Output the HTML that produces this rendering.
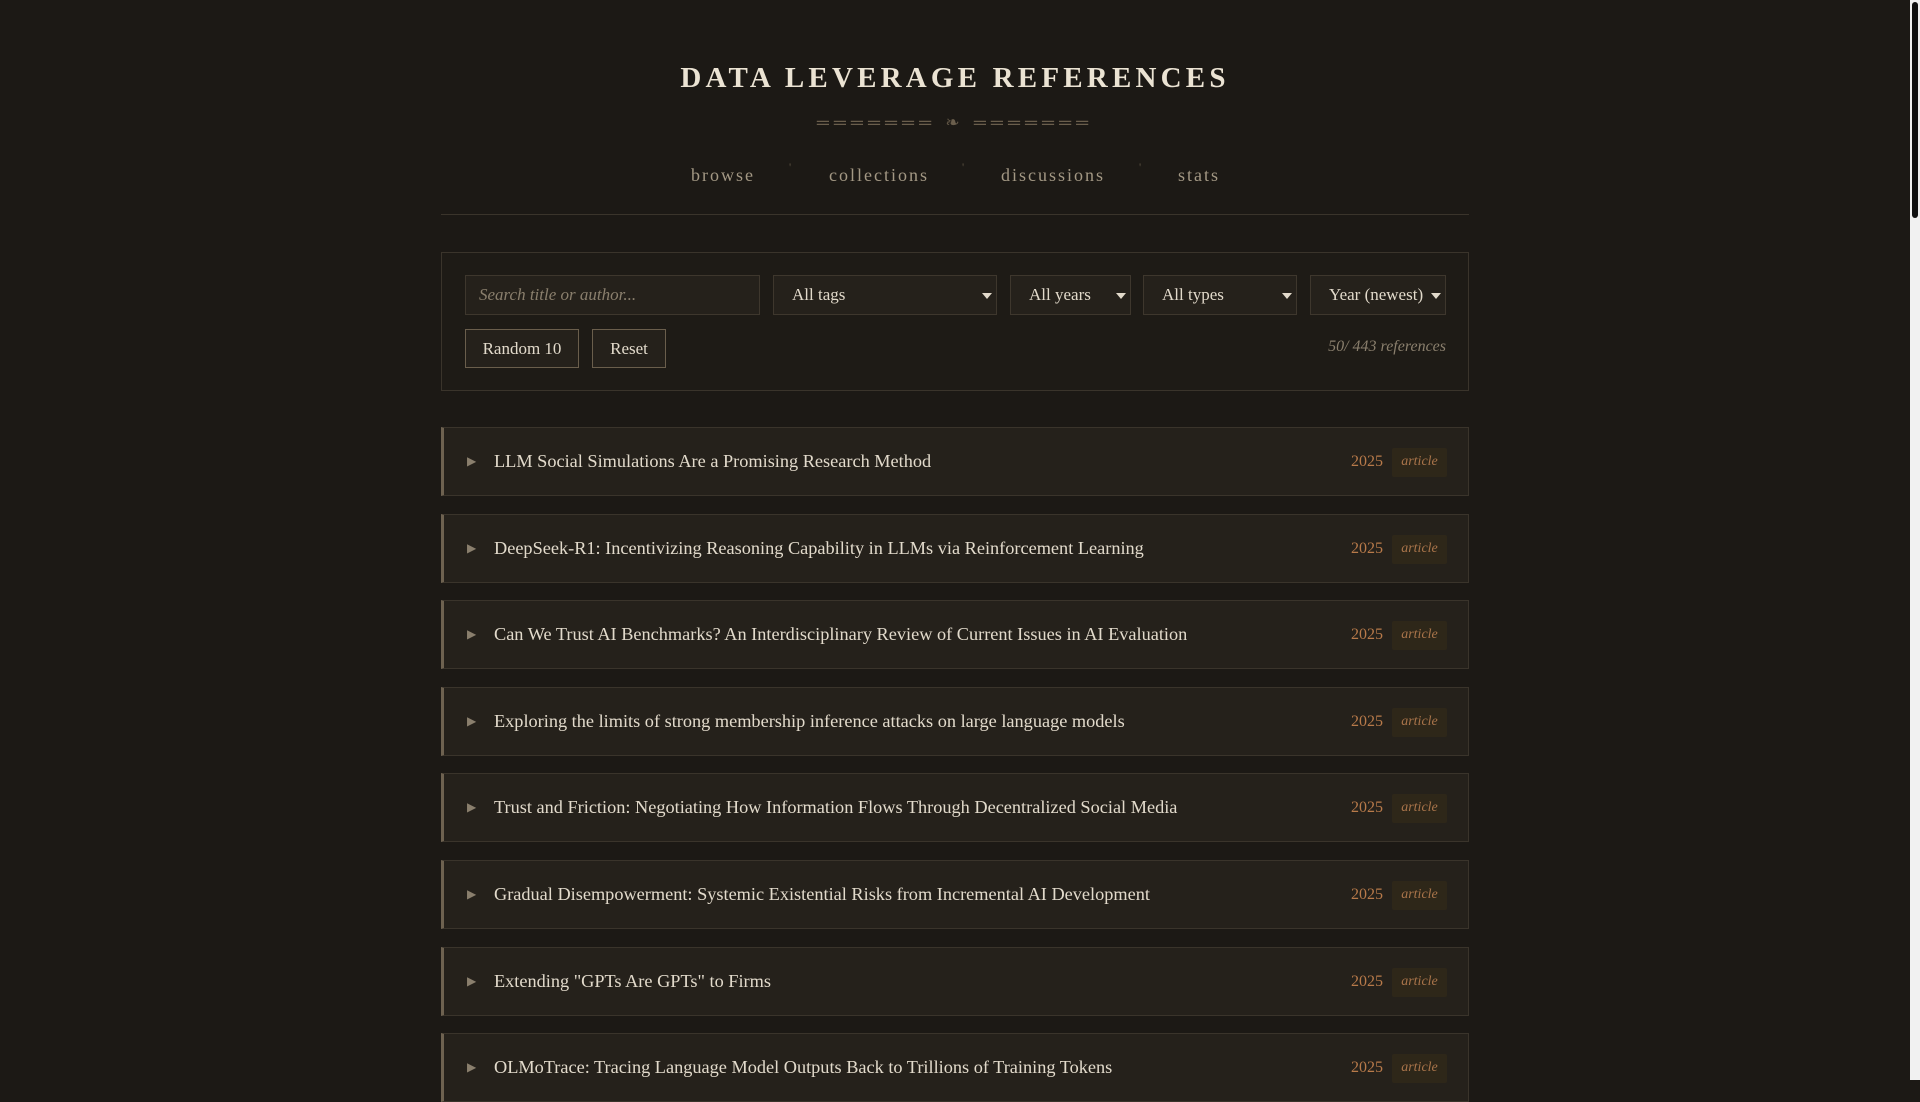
<!DOCTYPE html>
<html><head><meta charset="utf-8"><style>
*{box-sizing:border-box;margin:0;padding:0}
html,body{width:1920px;height:1080px;overflow:hidden;background:#1c1915;font-family:"Liberation Serif",serif}
.sb{position:absolute;left:1910px;top:0;width:10px;height:1080px;background:#f1f1f1}
.sb div{position:absolute;left:2px;top:2px;width:6px;height:216px;background:#111;border-radius:3px}
.wrap{position:absolute;left:441px;width:1028px;top:0}
h1{position:absolute;top:62px;left:0;width:1028px;text-align:center;color:#ebe3d3;font-size:29px;font-weight:bold;letter-spacing:4.2px}
.orn{position:absolute;top:113px;left:0;width:1028px;text-align:center;color:#6a5e4c;font-size:17px;letter-spacing:5px}
.nav a{position:absolute;top:165px;color:#a39884;font-size:18px;letter-spacing:2px;text-decoration:none}
.nav i{position:absolute;top:160px;color:#5a5040;font-size:12px;font-style:normal}
.hr{position:absolute;top:214px;left:0;width:1028px;height:1px;background:#3a342b}
.panel{position:absolute;top:252px;left:0;width:1028px;height:139px;border:1px solid #3a342b;background:#1e1b16}
.f{position:absolute;top:22px;height:40px;border:1px solid #3e372d;background:#25211b;color:#e2dacb;font-size:17px;line-height:38px;padding-left:18px}
.f.sel:after{content:"";position:absolute;right:4px;top:17px;border-left:5px solid transparent;border-right:5px solid transparent;border-top:6px solid #e2dacb}
.b{position:absolute;top:76px;height:39px;border:1px solid #6a5e4c;background:#25211b;color:#e2dacb;font-size:17px;line-height:37px;text-align:center}
.cnt{position:absolute;right:22px;top:85px;color:#8a7f6d;font-style:italic;font-size:16px}
.card{position:absolute;left:0;width:1028px;height:69px;background:#25211b;border:1px solid #3a342b;border-left:3px solid #6e6250}
.card .ar{position:absolute;left:23px;top:26px;color:#8a7f6d;font-size:12px}
.card .t{position:absolute;left:50px;top:23px;color:#e2dacb;font-size:18.3px;white-space:nowrap}
.card .y{position:absolute;left:907px;top:25px;color:#b87a4a;font-size:16px}
.card .g{position:absolute;left:948px;top:20px;width:55px;height:29px;background:#2e2719;border-radius:2px;color:#a9744a;font-style:italic;font-size:14px;text-align:center;line-height:28px}
</style></head><body>
<div class="sb"><div></div></div>
<div class="wrap">
<h1>DATA LEVERAGE REFERENCES</h1>
<div class="orn">═══════ ❧ ═══════</div>
<div class="nav">
<a style="left:250px">browse</a><i style="left:348px">'</i>
<a style="left:388px">collections</a><i style="left:521px">'</i>
<a style="left:560px">discussions</a><i style="left:698px">'</i>
<a style="left:737px">stats</a>
</div>
<div class="hr"></div>
<div class="panel">
<div class="f" style="left:23px;width:295px;color:#8a7f6d;font-style:italic;padding-left:13px">Search title or author...</div>
<div class="f sel" style="left:331px;width:224px">All tags</div>
<div class="f sel" style="left:568px;width:121px">All years</div>
<div class="f sel" style="left:701px;width:154px">All types</div>
<div class="f sel" style="left:868px;width:136px">Year (newest)</div>
<div class="b" style="left:23px;width:114px">Random 10</div>
<div class="b" style="left:150px;width:74px">Reset</div>
<div class="cnt">50/ 443 references</div>
</div>
<div class="card" style="top:427px"><span class="ar">▶</span><span class="t">LLM Social Simulations Are a Promising Research Method</span><span class="y">2025</span><span class="g">article</span></div>
<div class="card" style="top:514px"><span class="ar">▶</span><span class="t">DeepSeek-R1: Incentivizing Reasoning Capability in LLMs via Reinforcement Learning</span><span class="y">2025</span><span class="g">article</span></div>
<div class="card" style="top:600px"><span class="ar">▶</span><span class="t">Can We Trust AI Benchmarks? An Interdisciplinary Review of Current Issues in AI Evaluation</span><span class="y">2025</span><span class="g">article</span></div>
<div class="card" style="top:687px"><span class="ar">▶</span><span class="t">Exploring the limits of strong membership inference attacks on large language models</span><span class="y">2025</span><span class="g">article</span></div>
<div class="card" style="top:773px"><span class="ar">▶</span><span class="t">Trust and Friction: Negotiating How Information Flows Through Decentralized Social Media</span><span class="y">2025</span><span class="g">article</span></div>
<div class="card" style="top:860px"><span class="ar">▶</span><span class="t">Gradual Disempowerment: Systemic Existential Risks from Incremental AI Development</span><span class="y">2025</span><span class="g">article</span></div>
<div class="card" style="top:947px"><span class="ar">▶</span><span class="t">Extending "GPTs Are GPTs" to Firms</span><span class="y">2025</span><span class="g">article</span></div>
<div class="card" style="top:1033px"><span class="ar">▶</span><span class="t">OLMoTrace: Tracing Language Model Outputs Back to Trillions of Training Tokens</span><span class="y">2025</span><span class="g">article</span></div>
</div>
</body></html>
